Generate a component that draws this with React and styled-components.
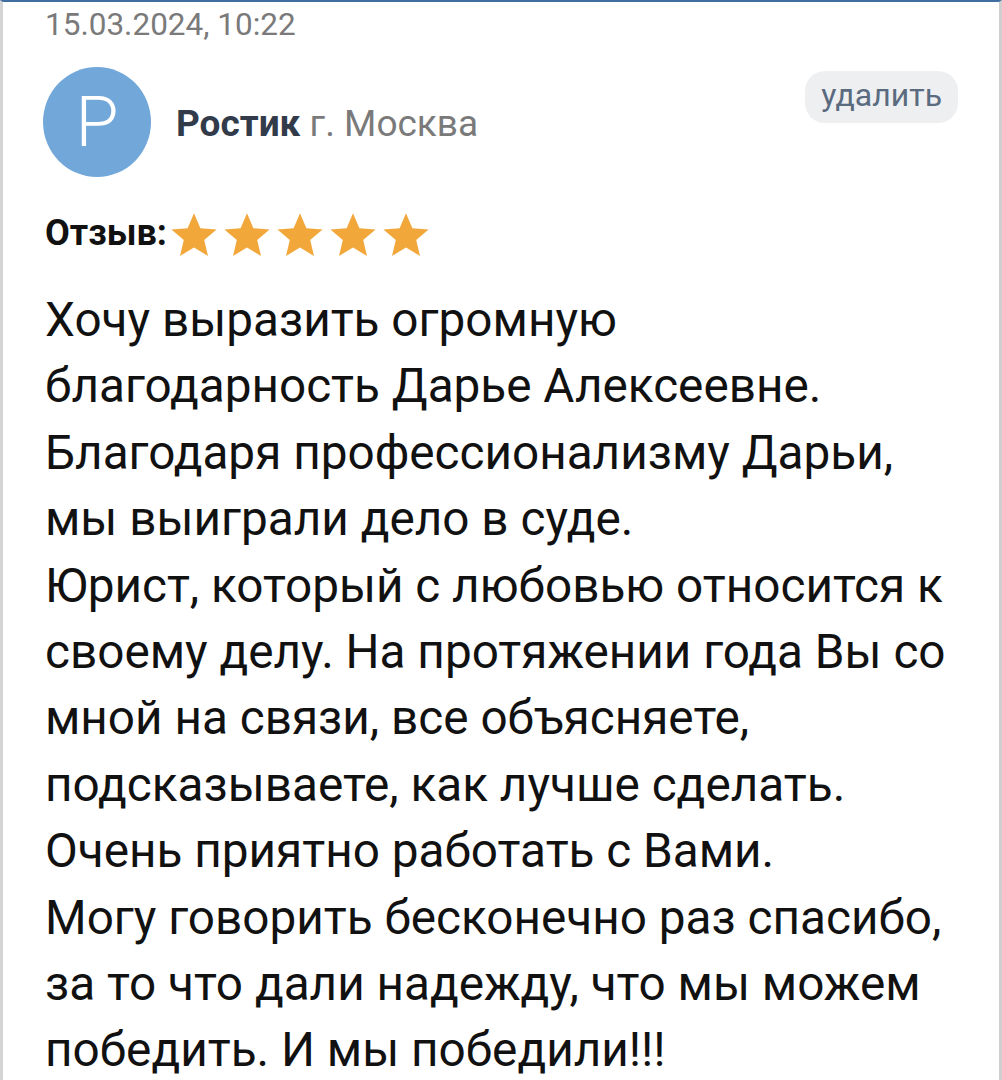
import React from 'react';
import styled, { createGlobalStyle } from 'styled-components';

const GlobalStyle = createGlobalStyle`
  html, body {
    margin: 0;
    padding: 0;
    background: #ffffff;
  }
  body {
    font-family: Roboto, "Noto Sans", Arial, sans-serif;
  }
`;

const Frame = styled.div`
  width: 1002px;
  height: 1080px;
  box-sizing: border-box;
  border-top: 2px solid #3f6fa0;
  border-left: 3px solid #d4d4d4;
  border-right: 3px solid #cfcfcf;
  overflow: hidden;
  background: #fff;
`;

const Review = styled.article`
  padding: 0 41px 0 42px;
`;

const DateLine = styled.div`
  font-size: 31.5px;
  line-height: 48px;
  color: #7a7a7a;
  margin-top: -1px;
`;

const Header = styled.div`
  display: flex;
  align-items: flex-start;
  justify-content: space-between;
  margin-top: 18px;
`;

const Author = styled.div`
  display: flex;
  align-items: center;
  gap: 25px;
`;

const Avatar = styled.div`
  width: 108px;
  height: 110px;
  margin-left: -2px;
  border-radius: 50%;
  background: #72a7da;
  color: #fff;
  display: flex;
  align-items: center;
  justify-content: center;
  font-size: 70px;
  font-weight: 300;
`;

const Name = styled.div`
  font-size: 37px;
  color: #7a7a7a;
  padding-top: 2px;

  b {
    color: #323b4a;
    font-weight: 700;
  }
`;

const DeleteButton = styled.button`
  margin-top: 4px;
  border: none;
  background: #eeeff1;
  color: #5a6b80;
  font-family: inherit;
  font-size: 32px;
  height: 52px;
  padding: 0 16px 4px;
  border-radius: 20px;
  line-height: 40px;
`;

const Rating = styled.div`
  display: flex;
  align-items: center;
  margin-top: 31px;
`;

const RatingLabel = styled.span`
  font-size: 36px;
  font-weight: 700;
  color: #111;
  margin-right: 3px;
`;

const Stars = styled.div`
  display: flex;
  gap: 5px;
  margin-top: 4px;
`;

const Body = styled.div`
  margin-top: 29px;
  font-size: 47.7px;
  line-height: 66.4px;
  color: #111;
  white-space: nowrap;
`;

const Star = () => (
  <svg width="48" height="46" viewBox="0 0 24 23">
    <path
      d="M12 0.6l3.2 7.5 8.1 0.6-6.2 5.3 1.9 8L12 17.7l-7 4.3 1.9-8L0.7 8.7l8.1-0.6z"
      fill="#f2a73b"
    />
  </svg>
);

const lines = [
  'Хочу выразить огромную',
  'благодарность Дарье Алексеевне.',
  'Благодаря профессионализму Дарьи,',
  'мы выиграли дело в суде.',
  'Юрист, который с любовью относится к',
  'своему делу. На протяжении года Вы со',
  'мной на связи, все объясняете,',
  'подсказываете, как лучше сделать.',
  'Очень приятно работать с Вами.',
  'Могу говорить бесконечно раз спасибо,',
  'за то что дали надежду, что мы можем',
  'победить. И мы победили!!!',
];

const App = () => (
  <Frame>
    <GlobalStyle />
    <Review>
      <DateLine>15.03.2024, 10:22</DateLine>
      <Header>
        <Author>
          <Avatar>Р</Avatar>
          <Name>
            <b>Ростик</b> г. Москва
          </Name>
        </Author>
        <DeleteButton>удалить</DeleteButton>
      </Header>
      <Rating>
        <RatingLabel>Отзыв:</RatingLabel>
        <Stars>
          {[0, 1, 2, 3, 4].map((i) => (
            <Star key={i} />
          ))}
        </Stars>
      </Rating>
      <Body>
        {lines.map((l, i) => (
          <div key={i}>{l}</div>
        ))}
      </Body>
    </Review>
  </Frame>
);

export default App;
